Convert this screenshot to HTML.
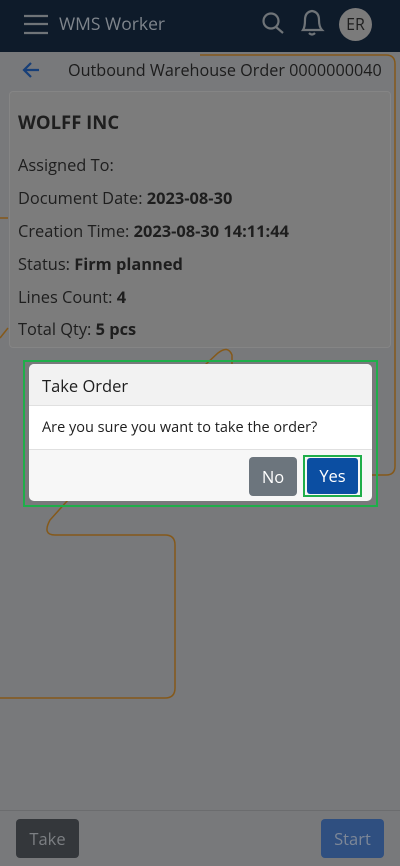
<!DOCTYPE html>
<html><head><style>
*{box-sizing:border-box;margin:0;padding:0}
body{width:400px;height:866px;overflow:hidden;background:#78797b;font-family:"Open Sans","Liberation Sans",sans-serif;position:relative;color:#1e1e1e}
.hdr{position:absolute;left:0;top:0;width:400px;height:52px;background:#0e1b2a}
.hdr .t{position:absolute;left:59px;top:12px;font-size:17.5px;color:#7f858c}
.av{position:absolute;left:339px;top:8px;width:33px;height:33px;border-radius:50%;background:#7b7b7b;color:#1f1f1f;font-size:16px;text-align:center;line-height:33px}
.title{position:absolute;left:68px;top:59px;font-size:16.2px;color:#1c1c1c}
.card{position:absolute;left:9px;top:91px;width:382px;height:257px;background:#7c7c7c;border:1px solid #858585;border-radius:4px}
.card .n{position:absolute;left:8px;top:18px;font-size:18.5px;font-weight:bold}
.card .r{position:absolute;left:8px;font-size:16.4px}
b{font-weight:bold}
.gbox{position:absolute;left:23px;top:360px;width:355px;height:147px;border:2px solid #1fae4a}
.dlg{position:absolute;left:29px;top:364px;width:343px;height:137px;background:#f7f7f7;border-radius:5px;overflow:hidden}
.dh{height:42px;background:#f2f2f2;border-bottom:1px solid #e0e0e0;font-size:16.5px;padding:10px 13px}
.db{height:44px;background:#fff;border-bottom:1px solid #e0e0e0;font-size:14.5px;padding:12px 13px}
.no{position:absolute;left:220px;top:93px;width:48px;height:39px;background:#6c757d;color:#fff;border-radius:4px;font-size:16.5px;text-align:center;line-height:39px}
.yg{position:absolute;left:303px;top:455px;width:59px;height:42px;border:2px solid #1fae4a}
.yes{position:absolute;left:307px;top:458px;width:51px;height:36px;background:#0b4ea2;color:#fff;border-radius:3px;font-size:16.5px;text-align:center;line-height:36px}
.foot{position:absolute;left:0;top:810px;width:400px;height:56px;border-top:1px solid #6b6c6e}
.take{position:absolute;left:16px;top:819px;width:63px;height:39px;background:#34373b;border-radius:4px;color:#7c7f83;font-size:16.5px;text-align:center;line-height:39px}
.start{position:absolute;left:321px;top:819px;width:63px;height:39px;background:#2f4f80;border-radius:4px;color:#7d8797;font-size:16.5px;text-align:center;line-height:39px}
</style></head><body>
<div class="hdr"></div>
<svg style="position:absolute;left:0;top:0" width="400" height="866">
<path d="M200 55 H386 Q395 55 395 64 V466 Q395 475 386 475 H372" fill="none" stroke="#85591a" stroke-width="1.5"/>
<path d="M0 218 H8 M0 338 L8 328" fill="none" stroke="#85591a" stroke-width="1.5"/>
<path d="M205 365 L218 353 Q228 345 232 355 V365" fill="none" stroke="#85591a" stroke-width="1.5"/>
<path d="M68 500 L50 520 Q42 535 55 535 H165 Q175 535 175 545 V688 Q175 698 165 698 H0" fill="none" stroke="#85591a" stroke-width="1.5"/>
<g stroke="#6f7478" stroke-width="2.2" fill="none">
<path d="M24 16 H48 M24 24 H48 M24 33 H48"/>
<circle cx="271" cy="21" r="7.5"/><path d="M276 27 L283 33"/>
<path d="M303 30 Q305 27 305 20 Q305 12 312 11 Q319 12 319 20 Q319 27 322 30 Z M309 33 Q312 36 315 33"/>
</g>
<path d="M39 70 H24 M31 63 L24 70 L31 77" stroke="#173f78" stroke-width="2.2" fill="none"/>
</svg>
<div class="hdr" style="background:none"><div class="t">WMS Worker</div><div class="av">ER</div></div>
<div class="title">Outbound Warehouse Order 0000000040</div>
<div class="card">
<div class="n">WOLFF INC</div>
<div class="r" style="top:61px">Assigned To:</div>
<div class="r" style="top:94px">Document Date: <b>2023-08-30</b></div>
<div class="r" style="top:127px">Creation Time: <b>2023-08-30 14:11:44</b></div>
<div class="r" style="top:160px">Status: <b>Firm planned</b></div>
<div class="r" style="top:193px">Lines Count: <b>4</b></div>
<div class="r" style="top:225px">Total Qty: <b>5 pcs</b></div>
</div>
<div class="gbox"></div>
<div class="dlg"><div class="dh">Take Order</div><div class="db">Are you sure you want to take the order?</div><div class="no">No</div></div>
<div class="yg"></div><div class="yes">Yes</div>
<div class="foot"></div>
<div class="take">Take</div><div class="start">Start</div>
</body></html>
